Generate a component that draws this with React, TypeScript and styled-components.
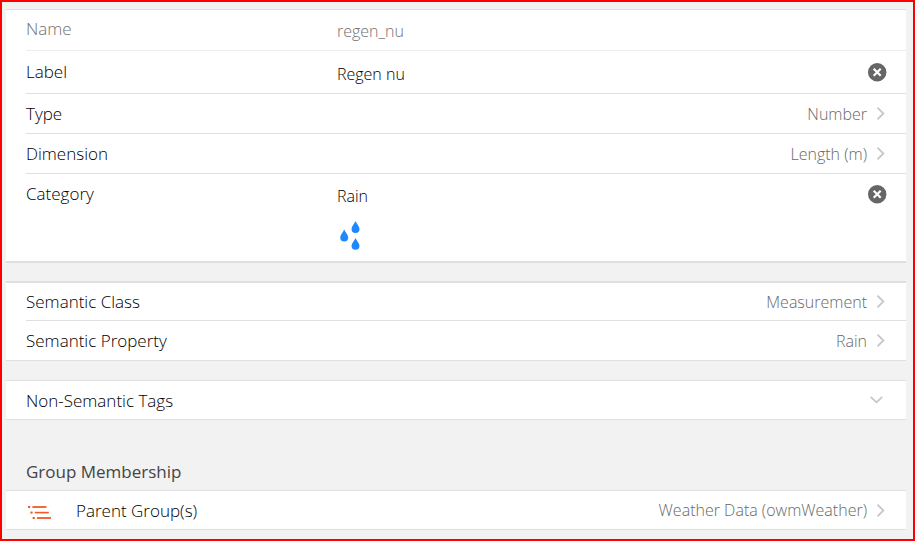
import React from "react";
import styled, { createGlobalStyle } from "styled-components";

const GlobalStyle = createGlobalStyle`
  *, *::before, *::after { box-sizing: border-box; }
  body {
    margin: 0;
    background: #f2f2f2;
    color: #000;
    font-family: "Open Sans", "Noto Sans", sans-serif;
    font-size: 17px;
    font-weight: 300;
  }
`;

const Page = styled.main`
  min-height: 100vh;
  padding: 7px 7px 9px 4px;
  border: 2px solid #ff0000;
  background: #f2f2f2;
`;

const List = styled.ul<{ $top?: number; $bottom?: number; $gap?: number }>`
  list-style: none;
  margin: ${(p) => p.$gap ?? 0}px 0 0;
  padding: 0;
  background: #fff;
  border: 0 solid #dfdfdf;
  border-top-width: ${(p) => p.$top ?? 1}px;
  border-bottom-width: ${(p) => p.$bottom ?? 1}px;
`;

const Item = styled.li<{ $faded?: boolean }>`
  padding-left: 20px;
  & > * {
    border-bottom: 1px solid ${(p) => (p.$faded ? "#eeeeee" : "#dfdfdf")};
  }
  &:last-child > * { border-bottom: 0; }
`;

const LinkRow = styled.a<{ $height?: number }>`
  display: flex;
  align-items: center;
  min-height: ${(p) => p.$height ?? 38}px;
  padding-right: 21px;
  color: inherit;
  text-decoration: none;
`;

const ToggleRow = styled.button`
  display: flex;
  align-items: center;
  width: 100%;
  min-height: 38px;
  padding: 0 23px 0 0;
  border: 0;
  background: none;
  color: inherit;
  font: inherit;
  text-align: left;
`;

const FieldRow = styled.div<{ $height: number; $pad?: number; $faded?: boolean }>`
  display: grid;
  grid-template-columns: 36% 1fr auto;
  align-items: start;
  column-gap: 1px;
  min-height: ${(p) => p.$height}px;
  padding: ${(p) => p.$pad ?? 8}px 19px 0 0;
  color: ${(p) => (p.$faded ? "#707070" : "#000")};
`;

const FieldLabel = styled.label`
  line-height: 24px;
`;

const FieldBody = styled.div`
  padding-top: 2px;
`;

const Field = styled.input`
  display: block;
  width: 100%;
  height: 24px;
  padding: 0;
  border: 0;
  outline: 0;
  background: none;
  color: inherit;
  font: inherit;
  font-size: 16px;
`;

const ClearButton = styled.button`
  display: flex;
  margin-top: 3px;
  padding: 0;
  border: 0;
  background: none;
`;

const Title = styled.span`
  flex: 1;
`;

const After = styled.span`
  margin-right: 10px;
  color: #686868;
  font-size: 16px;
`;

const Media = styled.span`
  display: flex;
  width: 50px;
  padding-top: 3px;
`;

const Preview = styled.div`
  padding-top: 13px;
`;

const GroupTitle = styled.h2`
  margin: 40px 20px 0;
  color: #444;
  font-size: 17px;
  font-weight: 500;
  line-height: 24px;
  & + ul { margin-top: 6px; }
`;

const Icon = styled.svg`
  display: block;
  flex: none;
`;

const ChevronRight = () => (
  <Icon width="8" height="13" viewBox="0 0 8 13" fill="none" stroke="#c7c7cc" strokeWidth="1.8" aria-hidden="true">
    <path d="M0.5 0.7 L6.4 6.5 L0.5 12.3" />
  </Icon>
);

const ChevronDown = () => (
  <Icon width="13" height="8" viewBox="0 0 13 8" fill="none" stroke="#c7c7cc" strokeWidth="1.8" aria-hidden="true">
    <path d="M0.7 0.8 L6.5 6.3 L12.3 0.8" />
  </Icon>
);

const Clear = ({ label }: { label: string }) => (
  <ClearButton type="button" aria-label={label}>
    <Icon width="19" height="19" viewBox="0 0 19 19" aria-hidden="true">
      <circle cx="9.2" cy="9.2" r="9.2" fill="#666" />
      <path d="M5.7 5.7 L12.7 12.7 M12.7 5.7 L5.7 12.7" stroke="#fff" strokeWidth="2.2" fill="none" />
    </Icon>
  </ClearButton>
);

const RainIcon = () => (
  <Icon width="26" height="30" viewBox="0 0 26 30" fill="#1e88ff" role="img" aria-label="Rain">
    <path d="M18.5 0.1 C19.5 3 22.5 5.4 22.5 8 A4 3.9 0 0 1 14.5 8 C14.5 5.4 17.5 3 18.5 0.1 Z" />
    <path d="M7.2 8.6 C8.2 11.5 11.2 13.9 11.2 16.5 A4 3.9 0 0 1 3.2 16.5 C3.2 13.9 6.2 11.5 7.2 8.6 Z" />
    <path d="M18.5 16.9 C19.5 19.8 22.5 22.2 22.5 24.8 A4 3.9 0 0 1 14.5 24.8 C14.5 22.2 17.5 19.8 18.5 16.9 Z" />
  </Icon>
);

const GroupIcon = () => (
  <Icon width="26" height="16" viewBox="0 0 26 16" fill="#f05a28" aria-hidden="true">
    <rect x="2" y="2" width="2.2" height="2" />
    <rect x="6.4" y="2.1" width="14" height="1.8" />
    <rect x="4.4" y="7.6" width="2.2" height="2" />
    <rect x="8.8" y="7.8" width="14" height="1.6" />
    <rect x="6.6" y="13" width="2.2" height="2" />
    <rect x="11" y="13.1" width="14" height="1.8" />
  </Icon>
);

interface LinkItemProps {
  title: string;
  after: string;
  height?: number;
  media?: React.ReactNode;
}

const LinkItem = ({ title, after, height, media }: LinkItemProps) => (
  <Item>
    <LinkRow href="#" $height={height}>
      {media && <Media>{media}</Media>}
      <Title>{title}</Title>
      <After>{after}</After>
      <ChevronRight />
    </LinkRow>
  </Item>
);

export default function App() {
  return (
    <>
      <GlobalStyle />
      <Page>
        <List $bottom={2}>
          <Item $faded>
            <FieldRow $height={41} $pad={7} $faded>
              <FieldLabel htmlFor="name">Name</FieldLabel>
              <FieldBody>
                <Field id="name" defaultValue="regen_nu" disabled />
              </FieldBody>
            </FieldRow>
          </Item>
          <Item>
            <FieldRow $height={43} $pad={9}>
              <FieldLabel htmlFor="label">Label</FieldLabel>
              <FieldBody>
                <Field id="label" defaultValue="Regen nu" />
              </FieldBody>
              <Clear label="Clear label" />
            </FieldRow>
          </Item>
          <LinkItem title="Type" after="Number" height={40} />
          <LinkItem title="Dimension" after="Length (m)" height={40} />
          <Item>
            <FieldRow $height={87}>
              <FieldLabel htmlFor="category">Category</FieldLabel>
              <FieldBody>
                <Field id="category" defaultValue="Rain" />
                <Preview>
                  <RainIcon />
                </Preview>
              </FieldBody>
              <Clear label="Clear category" />
            </FieldRow>
          </Item>
        </List>

        <List $top={2} $gap={18}>
          <LinkItem title="Semantic Class" after="Measurement" height={38} />
          <LinkItem title="Semantic Property" after="Rain" height={39} />
        </List>

        <List $gap={19}>
          <Item>
            <ToggleRow type="button" aria-expanded="false">
              <Title>Non-Semantic Tags</Title>
              <ChevronDown />
            </ToggleRow>
          </Item>
        </List>

        <GroupTitle>Group Membership</GroupTitle>
        <List>
          <LinkItem title="Parent Group(s)" after="Weather Data (owmWeather)" media={<GroupIcon />} />
        </List>
      </Page>
    </>
  );
}
